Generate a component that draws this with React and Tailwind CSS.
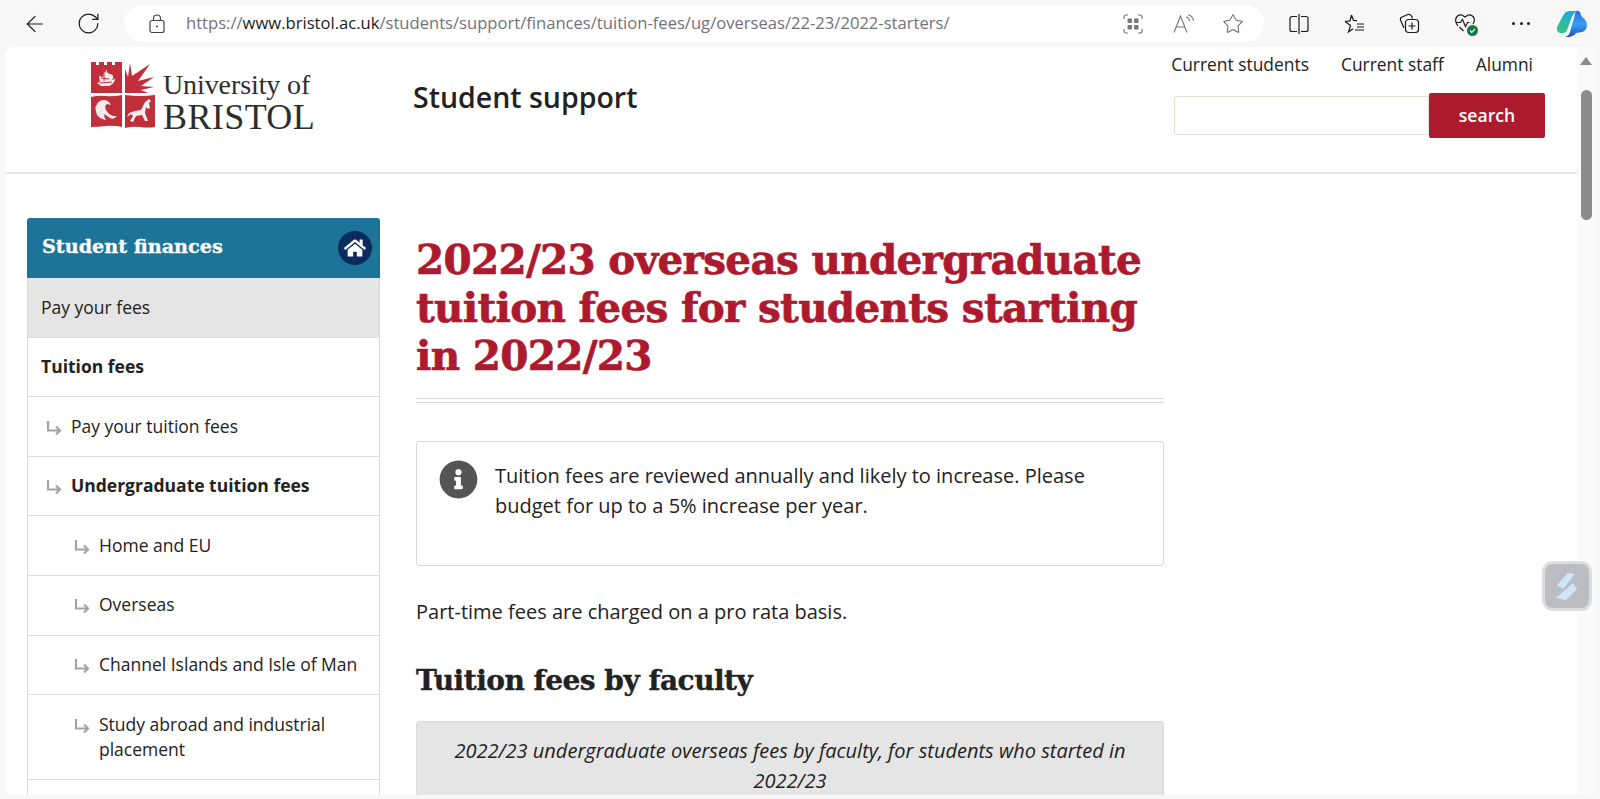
import React from "react";
import { ArrowLeft, RotateCw, Star } from "lucide-react";
import { FaHome, FaInfoCircle } from "react-icons/fa";

const slab = "font-['DejaVu_Serif',serif] font-bold";

const navRows = [
	{ label: "Pay your fees", level: 0, active: true },
	{ label: "Tuition fees", level: 0, bold: true },
	{ label: "Pay your tuition fees", level: 1 },
	{ label: "Undergraduate tuition fees", level: 1, bold: true },
	{ label: "Home and EU", level: 2 },
	{ label: "Overseas", level: 2 },
	{ label: "Channel Islands and Isle of Man", level: 2 },
	{ label: "Study abroad and industrial placement", level: 2 },
];

const SubArrow = () => (
	<svg width="16" height="15" viewBox="0 0 16 15" fill="none" stroke="#a3a3a3" strokeWidth="2.2" className="shrink-0 mt-[7px]">
		<path d="M2 0v9.500h12M10 5.500l4 4-4 4" />
	</svg>
);

const Crest = () => (
	<svg width="64" height="66" viewBox="0 0 64 66" className="shrink-0">
		{/* castle quarter with ship */}
		<path d="M0 0h5v3h3V0h5v3h3V0h5v3h3V0h7v31H0z" fill="#c02f3a" />
		<path d="M6 21l3-1-1-6 4 1 1-5 1.500 1 .5-4 1.500 4 5 2 1 3-2 2 4-1-2 4-4 3H10z" fill="#fff" opacity=".9" />
		<path d="M10 16l8 1M13 11v8M9 21l12-1" stroke="#c02f3a" strokeWidth="1" fill="none" />
		{/* sun */}
		<path d="M34 31L34 7l3 8 2-14 2 13L59 2 47 19l16-4-13 9 13 1-13 3 7 3z" fill="#c02f3a" />
		{/* dolphin quarter */}
		<path d="M0 35q8-2 15-1t16-1v32q-8-2-16-1t-15 1z" fill="#c02f3a" />
		<path d="M6 53q-4-10 3-14 7-3 11 4l-4-1q-3 2-1 6 4 7 11 6-3 4-7 2-3-2-6-4 0 3 2 6-6-1-9-5z" fill="#fff" opacity=".9" />
		{/* horse quarter */}
		<path d="M34 33q8 1 15 1t15-1v32q-8 1-15 0t-15 1z" fill="#c02f3a" />
		<path d="M38 51l6-2 6-1 4-8 4-3 2 2-2 2 1 5-2 1-2-2-1 6 3 8h-3l-3-6-6 1-3 6-3-1 3-5-2-2-4 3z" fill="#fff" opacity=".9" />
	</svg>
);

const Copilot = () => (
	<svg width="32" height="28" viewBox="0 0 32 28">
		<defs>
			<linearGradient id="cpA" x1="0.6" y1="0" x2="0.3" y2="1">
				<stop offset="0" stopColor="#1fa8e0" />
				<stop offset="1" stopColor="#35c77c" />
			</linearGradient>
			<linearGradient id="cpB" x1="0.5" y1="0" x2="0.5" y2="1">
				<stop offset="0" stopColor="#1d6fe0" />
				<stop offset="0.5" stopColor="#3aa0f0" />
				<stop offset="1" stopColor="#1c4fd0" />
			</linearGradient>
		</defs>
		<path d="M8 4q2-3 6-3h7q-3 1-5 6l-5 13q-1 3-4 3H4q-4-1-3-6z" fill="url(#cpA)" />
		<path d="M20 1q4-1 5 4l1 2q5 3 5 9-1 5-5 6l-6 1q-2 3-7 4H9q4-1 5-5l4-14q1-5 2-7z" fill="url(#cpB)" />
	</svg>
);

const TopBar = () => (
	<div className="h-[47px] shrink-0 flex items-center text-[#1a1a1a]">
		<ArrowLeft size={26} strokeWidth={1.1} className="ml-[22px]" />
		<RotateCw size={25} strokeWidth={1.2} className="ml-[28px]" />
		<div className="ml-[23px] w-[1140px] h-[37px] rounded-full bg-white flex items-center text-[#72727c]">
			<svg width="16" height="20" viewBox="0 0 16 20" fill="none" stroke="#444" strokeWidth="1.2" className="ml-[25px]">
				<rect x="1" y="6.500" width="14" height="12" rx="2" />
				<path d="M4.500 6.500V4.500a3.500 3.500 0 0 1 7 0v2" />
				<circle cx="8" cy="12.500" r="1" fill="#444" stroke="none" />
			</svg>
			<span className="ml-[21px] w-[776px] whitespace-nowrap text-[16.6px] font-['Open_Sans',sans-serif]">
				https://<span className="text-[#1c1c1c]">www.bristol.ac.uk</span>/students/support/finances/tuition-fees/ug/overseas/22-23/2022-starters/
			</span>
			<svg width="20" height="20" viewBox="0 0 20 20" fill="none" stroke="#777" strokeWidth="1.2" className="ml-[161px]">
				<path d="M1 5V3a2 2 0 0 1 2-2h2M15 1h2a2 2 0 0 1 2 2v2M19 15v2a2 2 0 0 1-2 2h-2M5 19H3a2 2 0 0 1-2-2v-2" />
				<rect x="4.500" y="4.500" width="4.500" height="4.500" rx="1" fill="#777" stroke="none" />
				<rect x="11" y="4.500" width="4.500" height="4.500" rx="1" fill="#777" stroke="none" />
				<rect x="4.500" y="11" width="4.500" height="4.500" rx="1" fill="#777" stroke="none" />
				<rect x="11" y="11" width="4.500" height="4.500" rx="1" fill="#777" stroke="none" />
			</svg>
			<svg width="21" height="20" viewBox="0 0 21 20" fill="none" stroke="#777" strokeWidth="1.1" className="ml-[30px]">
				<path d="M1 18.500L7.500 2l6.500 16.500M3.300 13h8.400" />
				<path d="M13 3q3 .5 3.500 4M15 .8q5 1 5.500 6.300" />
			</svg>
			<Star size={22} strokeWidth={1.1} color="#666" className="ml-[28px]" />
		</div>
		<svg width="20" height="20" viewBox="0 0 20 20" fill="none" stroke="#1a1a1a" strokeWidth="1.2" className="ml-[25px]">
			<path d="M8 2.500H3a2 2 0 0 0-2 2v11a2 2 0 0 0 2 2h5M12 2.500h5a2 2 0 0 1 2 2v11a2 2 0 0 1-2 2h-5M10 0v20" />
		</svg>
		<svg width="21" height="20" viewBox="0 0 21 20" fill="none" stroke="#1a1a1a" strokeWidth="1.2" className="ml-[35px]">
			<path d="M7.500 1l2 5.500 3.500.2M1 7.500l5.500 4L4.500 18 9 14.800M1 7.500l5-.6L7.500 1M13 10h7M13 13h7M11 16h9" />
		</svg>
		<svg width="21" height="21" viewBox="0 0 21 21" fill="none" stroke="#1a1a1a" strokeWidth="1.2" className="ml-[34px]">
			<path d="M5 15L1.500 7a2.500 2.500 0 0 1 1.500-3L9 1.500a3 3 0 0 1 3.500 1.500l1 2.500" />
			<rect x="6.500" y="6.500" width="13" height="13" rx="3" />
			<path d="M13 9.500v7M9.500 13h7" />
		</svg>
		<div className="ml-[35px] relative w-[21px] h-[21px]">
			<svg width="21" height="20" viewBox="0 0 21 20" fill="none" stroke="#1a1a1a" strokeWidth="1.2">
				<path d="M3 13L2 11.500Q0 8.500 1 5q2-4 6-3l3 2 3-2q4-1 6 3 1 3-1 6M1 9.500h4.500l2-3 3 7 2-4h2M4.500 14l4 4" />
			</svg>
			<svg width="11" height="11" viewBox="0 0 11 11" className="absolute right-[-2px] bottom-[-2px]">
				<circle cx="5.500" cy="5.500" r="5.500" fill="#107c41" />
				<path d="M3 5.700l1.800 1.800L8 4" fill="none" stroke="#fff" strokeWidth="1.2" />
			</svg>
		</div>
		<div className="ml-[36px] w-[18px] flex justify-between">
			<div className="w-[3px] h-[3px] rounded-full bg-[#1a1a1a]" />
			<div className="w-[3px] h-[3px] rounded-full bg-[#1a1a1a]" />
			<div className="w-[3px] h-[3px] rounded-full bg-[#1a1a1a]" />
		</div>
		<div className="ml-[26px]">
			<Copilot />
		</div>
	</div>
);

const Header = () => (
	<div className="h-[127px] shrink-0 flex items-start border-b-2 border-[#e6e6e6]">
		<div className="ml-[86px] mt-[15px] flex w-[224px]">
			<Crest />
			<div className="ml-[8px] font-['Liberation_Serif',serif] text-[#2e2e2e] whitespace-nowrap">
				<div className="text-[28px] leading-[32px] mt-[7px] tracking-[-0.1px]">University of</div>
				<div className="text-[36px] leading-[33px] tracking-[0.4px]">BRISTOL</div>
			</div>
		</div>
		<h2 className="ml-[98px] mt-[30px] text-[28.500px] leading-[40px] font-semibold text-[#222]">Student support</h2>
		<div className="ml-auto mr-[32px] flex flex-col items-end">
			<div className="mr-[12px] mt-[4px] flex gap-[32px] text-[17.400px] leading-[26px] text-[#222]">
				<span>Current students</span>
				<span>Current staff</span>
				<span>Alumni</span>
			</div>
			<div className="mt-[16px] flex items-center">
				<div className="w-[255px] h-[39px] bg-white border border-[#e4e1d8] rounded-l-[3px]" />
				<div className="w-[116px] h-[45px] bg-[#ae1a2d] rounded-[2px] flex items-center justify-center text-white font-semibold text-[17.600px]">search</div>
			</div>
		</div>
	</div>
);

const Sidebar = () => (
	<div className="w-[353px] shrink-0">
		<div className="h-[60px] bg-[#1c7599] rounded-t-[3px] flex items-center justify-between pl-[15px] pr-[8px] text-white">
			<span className={`${slab} text-[19.200px] pb-[1px] [-webkit-text-stroke:0.3px]`}>Student finances</span>
			<span className="w-[34px] h-[34px] rounded-full bg-[#0b2a5e] flex items-center justify-center">
				<FaHome size={22} />
			</span>
		</div>
		<div className="border-x border-[#d9d9d9]">
			{navRows.map((row) => (
				<div
					key={row.label}
					className={`flex border-b border-[#dedede] py-[16.500px] text-[17.500px] leading-[25.600px] text-[#222] ${row.active ? "bg-[#e5e5e5]" : ""} ${row.bold ? "font-bold" : ""} ${row.level === 0 ? "pl-[13px]" : row.level === 1 ? "pl-[18px]" : "pl-[46px]"}`}
				>
					{row.level > 0 && <SubArrow />}
					<span className={`${row.level > 0 ? "ml-[9px]" : ""} pr-[16px]`}>{row.label}</span>
				</div>
			))}
			<div className="h-[60px]" />
		</div>
	</div>
);

const Main = () => (
	<div className="ml-[36px] w-[748px] shrink-0 text-[#222]">
		<h1 className={`${slab} mt-[18px] text-[40.500px] leading-[48px] tracking-[-0.7px] text-[#ae1a2d] [-webkit-text-stroke:0.7px]`}>
			2022/23 overseas undergraduate tuition fees for students starting in 2022/23
		</h1>
		<div className="mt-[18px] h-[5px] border-y border-[#d5d5d5]" />
		<div className="mt-[38px] h-[125px] border border-[#d9d9d9] rounded-[3px] flex pl-[22px] pt-[18px] pr-[20px]">
			<FaInfoCircle size={39} color="#555" className="shrink-0" />
			<p className="ml-[17px] mt-[1px] text-[20px] leading-[30px]">
				Tuition fees are reviewed annually and likely to increase. Please budget for up to a 5% increase per year.
			</p>
		</div>
		<p className="mt-[31px] text-[20px] leading-[30px]">Part-time fees are charged on a pro rata basis.</p>
		<h2 className={`${slab} mt-[34px] text-[28px] leading-[40px] tracking-[-0.5px] [-webkit-text-stroke:0.4px]`}>Tuition fees by faculty</h2>
		<div className="mt-[20px] bg-[#e5e5e5] border border-[#d9d9d9] rounded-t-[3px] pt-[14px] pb-[14px] px-[30px] text-center italic text-[20px] leading-[30px]">
			2022/23 undergraduate overseas fees by faculty, for students who started in 2022/23
		</div>
	</div>
);

const FloatButton = () => (
	<div className="absolute left-[1537px] top-[514px] w-[50px] h-[50px] rounded-[11px] bg-[#bcbdc2] border-[3px] border-[#dcdde0] flex items-center justify-center">
		<svg width="22" height="27" viewBox="0 0 22 27" fill="#cfe6fa">
			<path d="M12 0l7 1L7 16l-6-4z" />
			<path d="M17 10l4 6-11 11-10-2z" />
		</svg>
	</div>
);

const App = () => (
	<div className="h-[799px] overflow-hidden bg-[#f7f7f7] flex flex-col font-['Open_Sans',sans-serif]">
		<TopBar />
		<div className="relative flex-1 mx-[5px] mb-[4px] rounded-lg bg-white overflow-hidden flex">
			<div className="flex-1 min-w-0">
				<Header />
				<div className="flex pl-[22px] pt-[44px]">
					<Sidebar />
					<Main />
				</div>
			</div>
			<div className="w-[18px] shrink-0 bg-[#fafafa] flex flex-col items-center">
				<div className="mt-[10px] w-0 h-0 border-x-[6px] border-x-transparent border-b-[8px] border-b-[#8c8c8c]" />
				<div className="mt-[25px] w-[11px] h-[130px] rounded-full bg-[#8c8c8c]" />
			</div>
			<FloatButton />
		</div>
	</div>
);

export default App;
